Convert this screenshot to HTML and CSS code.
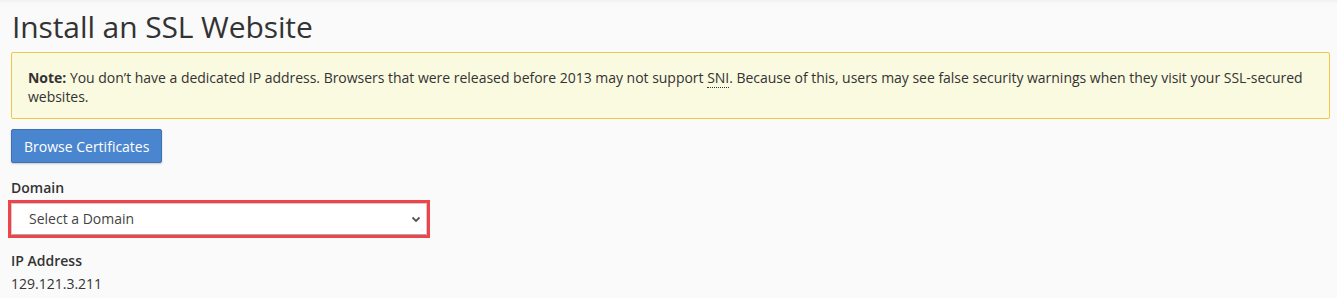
FILE: index.html
```html
<!DOCTYPE html>
<html>
<head>
<meta charset="utf-8">
<link rel="stylesheet" href="styles.css">
</head>
<body>
<div class="topbar"></div>
<main class="page">
  <h1 class="title">Install an SSL Website</h1>
  <div class="alert">
    <p class="alert-text"><strong>Note:</strong> You don’t have a dedicated IP address. Browsers that were released before 2013 may not support <abbr title="Server Name Indication">SNI</abbr>. Because of this, users may see false security warnings when they visit your SSL-secured websites.</p>
  </div>
  <button class="btn" type="button">Browse Certificates</button>
  <label class="label" for="domain">Domain</label>
  <div class="highlight">
    <div class="select" id="domain">
      <span class="select-text">Select a Domain</span>
      <svg class="chev" width="10" height="7" viewBox="0 0 10 7"><path d="M1.5 1.5 L5 5 L8.5 1.5" fill="none" stroke="#555" stroke-width="1.8"/></svg>
    </div>
  </div>
  <div class="label ip-label">IP Address</div>
  <div class="value">129.121.3.211</div>
</main>
</body>
</html>
```

FILE: styles.css
```css
* { box-sizing: border-box; }
html, body { margin: 0; padding: 0; }
body {
  background: #fafafa;
  font-family: "Open Sans", "Liberation Sans", sans-serif;
  color: #333;
  font-size: 14px;
  line-height: 20px;
}
.topbar {
  height: 4px;
  background: linear-gradient(#f0f0f0, #fafafa);
}
.page {
  padding: 0 7px 0 11px;
  display: flex;
  flex-direction: column;
  align-items: flex-start;
}
.title {
  margin: 3px 0 0 1px;
  font-weight: 400;
  font-size: 30px;
  line-height: 40px;
  color: #333;
  letter-spacing: -0.1px;
}
.alert {
  align-self: stretch;
  margin-top: 5px;
  background: #fafae0;
  border: 1px solid #f0c840;
  border-radius: 2px;
  padding: 15px 16px 12px 16px;
}
.alert-text {
  margin: 0;
  line-height: 19px;
  letter-spacing: -0.02px;
}
.alert strong { font-weight: 700; }
.alert abbr {
  text-decoration: none;
  border-bottom: 1px dotted #333;
}
.btn {
  margin-top: 10px;
  font-family: inherit;
  font-size: 14px;
  white-space: nowrap;
  color: #fff;
  background: #4a86d0;
  border: 1px solid #3f72b4;
  border-radius: 2px;
  padding: 0 12px;
  height: 34px;
  box-shadow: 0 1px 2px rgba(0,0,0,0.2);
}
.label {
  margin-top: 15px;
  font-weight: 600;
  display: block;
  line-height: 20px;
}
.highlight {
  margin: 2px 0 0 -3px;
  border: 3px solid #f0434a;
  width: 422px;
  height: 38px;
}
.select {
  height: 100%;
  background: #fff;
  border: 1px solid #ccc;
  border-bottom-color: #aaa;
  display: flex;
  align-items: center;
  justify-content: space-between;
  padding: 0 5px 0 17px;
}
.select-text { color: #444; }
.chev { margin-top: 1px; }
.ip-label { margin-top: 13px; }
.value { margin-top: 3px; }
```
